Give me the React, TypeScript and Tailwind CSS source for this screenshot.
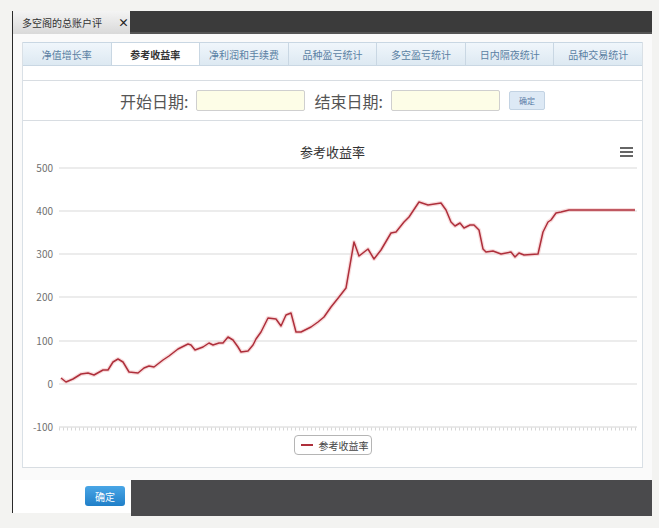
import React from 'react';

const FONT = { fontFamily: '"Noto Sans CJK SC", "Noto Sans", sans-serif' };

const TABS = ['净值增长率', '参考收益率', '净利润和手续费', '品种盈亏统计', '多空盈亏统计', '日内隔夜统计', '品种交易统计'];

// points traced in page coordinates (chart svg uses the same coordinates)
const LINE: [number, number][] = [
  [60, 378], [65, 382], [72, 379], [80, 374], [87, 373], [93, 375], [102, 370], [107, 370],
  [112, 362], [117, 359], [122, 362], [128, 372], [137, 373], [143, 368], [148, 366], [153, 367],
  [162, 360], [168, 356], [177, 349], [187, 344], [190, 345], [194, 350], [202, 347], [208, 343],
  [212, 345], [218, 343], [222, 343], [227, 337], [232, 340], [237, 347], [240, 352], [247, 351],
  [252, 345], [255, 339], [260, 332], [267, 318], [275, 319], [280, 326], [285, 315], [290, 313],
  [295, 332], [300, 332], [310, 327], [317, 322], [323, 317], [330, 307], [338, 297], [345, 288],
  [353, 242], [358, 256], [367, 249], [373, 259], [380, 250], [390, 233], [395, 232], [403, 222],
  [408, 217], [418, 202], [427, 205], [440, 203], [445, 210], [450, 222], [454, 226], [459, 223],
  [463, 228], [469, 225], [473, 225], [478, 230], [482, 249], [485, 252], [492, 251], [500, 254],
  [510, 252], [514, 257], [518, 253], [523, 255], [537, 254], [542, 232], [547, 222], [550, 220],
  [555, 213], [560, 212], [568, 210], [634, 210],
];

const TICKS = [
  { v: '500', y: 168 },
  { v: '400', y: 211 },
  { v: '300', y: 254 },
  { v: '200', y: 297 },
  { v: '100', y: 341 },
  { v: '0', y: 384 },
];

const Chart: React.FC = () => {
  const pts = LINE.map(([x, y]) => `${x},${y}`).join(' ');
  return (
    <svg width={621} height={272} viewBox="22 160 621 272" className="block">
      {TICKS.map((t) => (
        <g key={t.v}>
          <line x1={58} x2={636} y1={t.y} y2={t.y} stroke="#d9d9d9" strokeWidth={1} />
          <text x={52} y={t.y + 3.5} textAnchor="end" fontSize={10} fill="#707070" style={FONT}>{t.v}</text>
        </g>
      ))}
      <line x1={58} x2={636} y1={427} y2={427} stroke="#d4d4d4" strokeWidth={1} />
      <line x1={58} x2={636} y1={429} y2={429} stroke="#d8d8d8" strokeWidth={3} strokeDasharray="1 3" />
      <text x={52} y={430.5} textAnchor="end" fontSize={10} fill="#707070" style={FONT}>-100</text>
      <polyline points={pts} fill="none" stroke="#f3c4c6" strokeWidth={4} strokeLinejoin="round" opacity={0.6} />
      <polyline points={pts} fill="none" stroke="#ae2f3b" strokeWidth={1.5} strokeLinejoin="round" />
    </svg>
  );
};

const App: React.FC = () => {
  return (
    <div className="w-[659px] h-[528px] bg-[#f3f3f1] pt-[11px] pl-[12px] overflow-hidden" style={FONT}>
      <div className="w-[640px] flex flex-col">
        {/* title bar */}
        <div className="flex h-[23px]">
          <div className="w-[118px] border-l border-[#2a2a2a] bg-gradient-to-b from-[#f4f4f4] to-[#d9d9d9] flex items-center pl-[9px] text-[10px] text-[#333]">
            <span>多空阁的总账户评</span>
            <span className="ml-[16px] text-[11px] font-bold text-[#222]">×</span>
          </div>
          <div className="flex-1 bg-[#3b3b3b] border-b-2 border-[#555]" />
        </div>

        {/* main content */}
        <div className="h-[446px] bg-[#fafafa] border-l border-[#2a2a2a] pl-[9px] pt-[8px]">
          <div className="w-[621px] bg-white border-x border-[#d9e0e6]">
            <div className="flex h-[24px] bg-gradient-to-b from-[#f0f6fb] to-[#dde9f2] border-y border-[#c9d7e3]">
              {TABS.map((t, i) => (
                <div
                  key={t}
                  className={
                    i === 1
                      ? 'flex-1 flex items-center justify-center text-[10px] font-bold text-[#333] bg-white border-r border-[#c9d7e3]'
                      : 'flex-1 flex items-center justify-center text-[10px] text-[#5a7fa3] border-r border-[#c9d7e3] last:border-r-0'
                  }
                >
                  {t}
                </div>
              ))}
            </div>
            <div className="h-[14px] bg-white" />

            {/* date filter */}
            <div className="h-[41px] border-y border-[#d8dde2] flex items-center justify-center text-[16px] text-[#555]">
              <span>开始日期:</span>
              <div className="ml-[7px] w-[109px] h-[21px] bg-[#fdfde7] border border-[#cfcfcf] rounded-[2px]" />
              <span className="ml-[10px]">结束日期:</span>
              <div className="ml-[8px] w-[109px] h-[21px] bg-[#fdfde7] border border-[#cfcfcf] rounded-[2px]" />
              <div className="ml-[9px] w-[36px] h-[19px] bg-[#dde9f5] border border-[#c3d3e3] rounded-[2px] flex items-center justify-center text-[8px] text-[#5a7aa5]">
                确定
              </div>
            </div>

            {/* chart */}
            <div className="border-b border-[#d8dde2] pt-[23px]">
              <div className="h-[16px] relative flex items-center justify-center text-[13px] text-[#333]">
                <span>参考收益率</span>
                <div className="absolute right-[9px] top-[3px] flex flex-col gap-[2px]">
                  <div className="w-[13px] h-[2px] bg-[#666]" />
                  <div className="w-[13px] h-[2px] bg-[#666]" />
                  <div className="w-[13px] h-[2px] bg-[#666]" />
                </div>
              </div>
              <Chart />
              <div className="mt-[3px] h-[20px] flex justify-center">
                <div className="w-[78px] h-[20px] border border-[#b5b5b5] rounded-[4px] bg-white flex items-center pl-[6px]">
                  <div className="w-[12px] h-[2px] bg-[#ae2f3b]" />
                  <span className="ml-[6px] text-[10px] text-[#444]">参考收益率</span>
                </div>
              </div>
              <div className="h-[12px]" />
            </div>
          </div>
        </div>

        {/* bottom */}
        <div className="flex h-[36px]">
          <div className="w-[119px] h-[33px] bg-white border-l border-[#2a2a2a] flex items-start pt-[6px] pl-[72px]">
            <div className="w-[40px] h-[20px] rounded-[3px] bg-gradient-to-b from-[#49a6e6] to-[#1f7fc8] flex items-center justify-center text-[10px] text-white">
              确定
            </div>
          </div>
          <div className="flex-1 bg-[#4a4a4c]" />
        </div>
      </div>
    </div>
  );
};

export default App;
